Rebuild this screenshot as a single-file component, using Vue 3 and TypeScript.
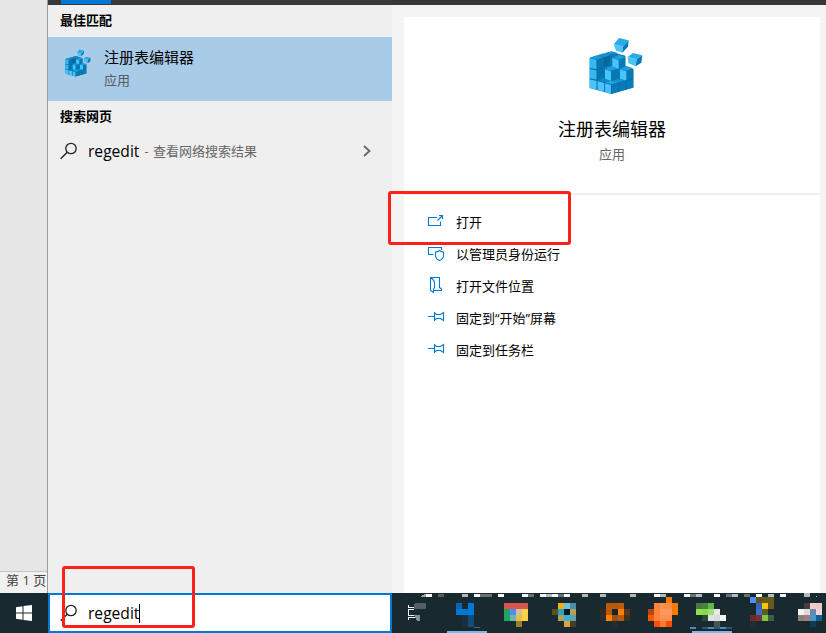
<script setup lang="ts">
import { h, type FunctionalComponent } from 'vue'

interface Action { icon: string; label: string }
type Cell = [x: number, y: number, color: string]

const actions: Action[] = [
  { icon: 'open', label: '打开' },
  { icon: 'admin', label: '以管理员身份运行' },
  { icon: 'folder', label: '打开文件位置' },
  { icon: 'pin', label: '固定到“开始”屏幕' },
  { icon: 'pin', label: '固定到任务栏' },
]

const cubeFaces: [string, string][] = [
  ['150,112 215,94 257,106 257,138 281,146 281,202 215,221 150,203', '#0879b5'],
  ['150,112 171,105 192,110 172,118', '#199bd8'],
  ['174,104 193,99 213,104 194,110', '#168fca'],
  ['196,98 215,93 235,98 215,103', '#168fca'],
  ['150,113 171,119 171,147 150,143', '#35b8f2'],
  ['173,119 190,113 190,141 173,147', '#0875ae'],
  ['192,112 211,106 211,134 192,140', '#08699f'],
  ['150,146 171,150 171,178 150,174', '#35b8f2'],
  ['173,150 194,146 194,180 173,178', '#0875ae'],
  ['150,177 171,181 171,208 150,203', '#48c4fa'],
  ['173,182 194,187 194,214 173,209', '#48c4fa'],
  ['196,188 214,193 214,220 196,215', '#48c4fa'],
  ['173,180 194,173 213,180 195,187', '#118bc8'],
  ['218,112 238,103 257,110 238,118', '#1ba0dd'],
  ['218,113 237,120 237,146 218,140', '#48c4fa'],
  ['239,120 257,112 257,137 239,145', '#0879b5'],
  ['196,145 215,137 234,144 215,151', '#1ba0dd'],
  ['196,147 214,153 214,181 196,175', '#48c4fa'],
  ['216,153 235,146 235,174 216,181', '#0879b5'],
  ['241,145 261,137 281,144 261,151', '#1ba0dd'],
  ['241,147 260,153 260,181 241,175', '#48c4fa'],
  ['262,153 281,146 281,173 262,180', '#0879b5'],
  ['216,183 239,175 259,182 236,188 216,192', '#1593cf'],
  ['196,186 215,181 235,187 215,193', '#20a5e0'],
  ['216,194 236,188 236,214 216,220', '#087bb9'],
  ['238,187 258,183 258,208 238,213', '#087bb9'],
  ['260,182 281,177 281,201 260,207', '#087bb9'],
  ['238,53 267,60 250,79 222,72', '#2bace6'],
  ['222,72 250,79 248,97 229,91', '#49c5fb'],
  ['267,60 265,79 248,97 250,79', '#0879b5'],
  ['280,98 308,105 291,117 264,110', '#2bace6'],
  ['264,110 291,117 288,138 266,129', '#49c5fb'],
  ['291,117 308,105 305,127 288,138', '#0879b5'],
]
const seams = 'M172 119V209M195 112V135M195 181V215M215 194V221M150 145L172 149M150 176L172 180L195 187L215 193L281 175M237 188V214M259 182V208M173 148L194 142'

const RegistryIcon: FunctionalComponent = () =>
  h('svg', { viewBox: '148 50 162 174' }, [
    ...cubeFaces.map(([points, fill]) => h('polygon', { points, fill })),
    h('path', { d: seams, fill: 'none', stroke: '#0a659a', 'stroke-width': 1.6 }),
  ])

const W = '#f6f6f6'
const L = '#b2babd'
const G = '#667276'

const topCells: Cell[] = [
  [426, 594, W], [438, 594, '#566063'], [462, 594, L], [474, 594, W], [480, 594, G], [486, 594, G],
  [498, 594, W], [522, 594, W], [528, 594, G], [540, 594, W], [546, 594, L], [552, 594, W],
  [558, 594, G], [564, 594, W], [582, 594, L], [600, 594, L], [630, 594, L], [654, 594, W],
  [660, 594, L], [684, 594, W], [690, 594, G], [696, 594, L], [714, 594, W], [726, 594, G],
  [732, 594, L], [744, 594, G], [756, 594, W], [768, 594, L], [780, 594, W],
]

const cells: Cell[] = [
  [468, 597, '#132d40'], [456, 603, '#0767b5'], [468, 603, '#0078d7'],
  [456, 609, '#0078d7'], [462, 609, '#0078d7'], [468, 609, '#0078d7'],
  [462, 615, '#15303f'], [468, 615, '#0d4c7d'], [462, 621, '#15303f'], [468, 621, '#104c78'],
  [504, 603, '#d9534f'], [510, 603, '#d9534f'], [516, 603, '#d9534f'], [522, 603, '#cf5b50'],
  [504, 609, '#1fa463'], [510, 609, '#4f8df5'], [516, 609, '#d4bf98'], [522, 609, '#ffd04a'],
  [504, 615, '#1fa463'], [510, 615, '#70b5a8'], [516, 615, '#dfbd5a'], [522, 615, '#ffcf46'], [516, 621, '#9f7d20'],
  [558, 603, '#eeb01e'], [564, 603, '#6fc2dc'], [570, 603, '#4a8fa5'],
  [552, 609, '#55521f'], [558, 609, '#2ba3c7'], [564, 609, '#0c1b20'], [570, 609, '#b0a05c'],
  [558, 615, '#b0a05c'], [564, 615, '#2fb4dc'], [570, 615, '#5ba2ab'], [564, 621, '#e2a23b'], [570, 621, '#4b3b1f'],
  [606, 603, '#b8590b'], [612, 603, '#b8590b'], [618, 603, '#bd5d0c'],
  [600, 609, '#33291f'], [606, 609, '#b8590b'], [612, 609, '#172327'], [618, 609, '#ff7f0a'], [624, 609, '#5a3519'],
  [600, 615, '#272d2c'], [606, 615, '#ff8008'], [612, 615, '#9a5014'], [618, 615, '#b8590b'], [624, 615, '#3b2d21'], [612, 621, '#252c2b'],
  [666, 597, '#ff7900'], [654, 603, '#ff813b'], [660, 603, '#ff8f4e'], [666, 603, '#ff8b47'], [672, 603, '#ff7900'],
  [648, 609, '#b14b15'], [654, 609, '#ff813b'], [660, 609, '#ff9860'], [666, 609, '#ff9860'], [672, 609, '#ff7900'],
  [648, 615, '#ff5900'], [654, 615, '#ff8541'], [660, 615, '#ff8f4e'], [666, 615, '#ff8f4e'],
  [654, 621, '#ff4c00'], [660, 621, '#ff7a30'], [666, 621, '#ff4c00'],
  [696, 603, '#4b7642'], [702, 603, '#4f803c'], [708, 603, '#61b844'],
  [696, 609, '#8be04e'], [702, 609, '#84dc4a'], [708, 609, '#a5de78'], [714, 609, '#e9e9e9'],
  [702, 615, '#2c4a30'], [708, 615, '#e0e2e3'], [714, 615, '#d9dcdd'], [720, 615, '#f3f3f3'], [714, 621, '#4a5559'],
  [750, 597, '#4d8ff9'], [756, 597, '#5e531a'], [762, 597, '#65591b'], [768, 597, '#65591b'],
  [756, 603, '#3467b5'], [762, 603, '#ffc400'], [768, 603, '#69591c'],
  [756, 609, '#3a70c4'], [762, 609, '#5b5c22'], [750, 615, '#6b2a2e'], [756, 615, '#793135'], [762, 615, '#80c843'], [768, 615, '#3c6039'], [750, 621, '#252b30'],
  [804, 603, '#493b3f'], [810, 603, '#f0cccd'], [816, 603, '#eac9ca'],
  [798, 609, '#f5f5f5'], [804, 609, '#dadcde'], [810, 609, '#6b87af'], [816, 609, '#eed5db'],
  [798, 615, '#8b7f7d'], [804, 615, '#a67c7e'], [810, 615, '#4696c7'], [816, 615, '#135f8b'], [810, 621, '#103c52'],
]

const badgeCells: Cell[] = [
  [690, 627, '#5089b2'], [702, 627, '#2e566c'], [708, 627, '#5089b2'],
  [714, 627, '#2e566c'], [720, 627, '#5089b2'], [726, 627, '#2e566c'],
]
</script>

<template>
  <div class="screen">
    <div class="upper">
      <aside class="document">
        <div class="page"></div>
        <div class="status">第 1 页</div>
      </aside>
      <main class="search">
        <div class="tabs"><span class="tab"></span></div>
        <div class="body">
          <section class="results">
            <h2>最佳匹配</h2>
            <div class="best">
              <RegistryIcon class="small-icon" />
              <div class="names">
                <div class="name">注册表编辑器</div>
                <div class="kind">应用</div>
              </div>
            </div>
            <h2>搜索网页</h2>
            <div class="web">
              <svg class="lens" viewBox="0 0 18 18"><circle cx="11" cy="6.5" r="5.2" /><path d="M7.2 10.2L.7 16.7" /></svg>
              <span class="query">regedit</span>
              <span class="hint">- 查看网络搜索结果</span>
              <svg class="chevron" viewBox="0 0 8 12"><path d="M1 1l5.5 5L1 11" /></svg>
            </div>
          </section>
          <section class="detail">
            <div class="hero">
              <RegistryIcon class="large-icon" />
              <div class="title">注册表编辑器</div>
              <div class="type">应用</div>
            </div>
            <ul class="actions">
              <li v-for="action in actions" :key="action.label">
                <svg viewBox="0 0 18 18">
                  <path v-if="action.icon === 'open'" d="M10 5.5H1.5V13.500H13.500V9.500M10.500 8.500L15.500 3.500M12 3.500H15.500V7" />
                  <template v-else-if="action.icon === 'admin'">
                    <path d="M6.500 10.500H1.500V3.500H14.500V6" />
                    <path d="M12.500 6.500C11 7.800 10 8 8.500 8V11.500C8.500 14 10 15.500 12.500 16.500C15 15.500 16.500 14 16.500 11.500V8C15 8 14 7.800 12.500 6.500Z" />
                  </template>
                  <path v-else-if="action.icon === 'folder'" d="M6.500 13V16.500L3.500 14.500V1.500L5.500 3Q7.500 5 7.500 7V11.500L6.500 13M3.500 1.500H12.500V11.500L14.500 13V14.500H6.500" />
                  <path v-else d="M1 8.500H7.500M7.500 4V13M7.500 5L9.500 6.500H13.500L16.500 4.500V12.500L13.500 10.500H9.500L7.500 12" />
                </svg>
                <span>{{ action.label }}</span>
              </li>
            </ul>
          </section>
        </div>
      </main>
    </div>
    <footer class="taskbar">
      <div class="start">
        <svg viewBox="0 0 16 16"><path d="M0 2.300L6.500 1.300V7.500H0ZM7.500 1.100L16 0V7.500H7.500ZM0 8.500H6.500V14.700L0 13.700ZM7.500 8.500H16V16L7.500 14.900Z" /></svg>
      </div>
      <div class="input">
        <svg class="lens" viewBox="0 0 18 18"><circle cx="11" cy="6.500" r="5.200" /><path d="M7.200 10.200L.7 16.700" /></svg>
        <span class="query">regedit</span><span class="caret"></span>
      </div>
      <svg class="apps" viewBox="392 593 434 40" shape-rendering="crispEdges">
        <path d="M420 597L425 594H426V597Z" fill="#9da5a8" />
        <rect v-for="(c, i) in topCells" :key="'t' + i" :x="c[0]" :y="c[1]" width="6" height="3" :fill="c[2]" />
        <rect x="804" y="593" width="6" height="4" fill="#b2babd" />
        <rect x="816" y="596" width="1" height="1" fill="#b2babd" />
        <path d="M408.500 605V608M408 607.500H414M408.500 610V615M408 609.500H414M408 615.500H414M408.500 617V620M408 617.500H415" fill="none" stroke="#f2f2f2" />
        <path d="M415 603H426V609H414V606Z" fill="#535f62" />
        <path d="M414 615H420V621H417Z" fill="#899093" />
        <rect v-for="(c, i) in cells" :key="'c' + i" :x="c[0]" :y="c[1]" width="6" height="6" :fill="c[2]" />
        <rect v-for="(c, i) in badgeCells" :key="'b' + i" :x="c[0]" :y="c[1]" width="6" height="2" :fill="c[2]" />
        <rect x="474" y="627" width="6" height="1" fill="#4a6a7d" />
        <rect x="447" y="631" width="40" height="2" fill="#76b9ed" />
        <rect x="692" y="631" width="40" height="2" fill="#76b9ed" />
      </svg>
    </footer>
    <div class="mark mark-open"></div>
    <div class="mark mark-input"></div>
  </div>
</template>

<style>
body { margin: 0; overflow: hidden; }
</style>

<style scoped>
* { box-sizing: border-box; }
.screen { position: relative; display: flex; flex-direction: column; width: 826px; height: 633px; overflow: hidden; font-family: "Open Sans", "Noto Sans CJK SC", sans-serif; font-size: 13px; color: #000; }
.upper { display: flex; height: 593px; }
.document { display: flex; flex-direction: column; width: 48px; border-right: 1px solid #9d9d9d; background: #e6e6e6; }
.page { flex: 1; }
.status { height: 22px; padding-left: 6px; border-top: 1px solid #c6c6c6; background: #f1f1f1; color: #444; line-height: 16px; white-space: nowrap; overflow: hidden; }
.search { display: flex; flex-direction: column; flex: 1; }
.tabs { height: 5px; padding-left: 13px; background: #383838; }
.tab { display: block; width: 50px; height: 4px; background: #0078d7; }
.body { display: flex; flex: 1; background: #f4f4f4; }
.results { width: 344px; background: #efefef; }
h2 { height: 32px; margin: 0; padding-left: 12px; font-size: 13px; line-height: 30px; font-weight: 700; }
.best { display: flex; height: 64px; padding: 10px 0 0 17px; background: #a8cbe7; }
.small-icon { width: 26px; height: 28px; margin-top: 2px; }
.names { padding-left: 13px; }
.name { height: 20px; font-size: 15px; line-height: 20px; }
.kind { height: 24px; color: #555d64; line-height: 26px; }
.web { display: flex; align-items: center; height: 36px; padding: 0 21px 0 12px; }
.lens { flex: none; width: 18px; height: 18px; fill: none; stroke: #222; stroke-width: 1.3; }
.query { margin-left: 10px; font-size: 15.6px; line-height: 20px; }
.hint { margin: -2px 0 0 5px; color: #666; word-spacing: 1px; }
.chevron { width: 8px; height: 12px; margin-left: auto; fill: none; stroke: #666; stroke-width: 1.8; }
.detail { display: flex; flex-direction: column; width: 416px; margin: 12px 6px 0 12px; background: #fff; }
.hero { display: flex; flex-direction: column; align-items: center; height: 178px; padding-top: 20px; border-bottom: 2px solid #f0f0f0; }
.large-icon { width: 54px; height: 58px; margin-left: 8px; }
.title { height: 28px; margin-top: 20px; font-size: 18px; line-height: 28px; }
.type { height: 20px; margin-top: 1px; color: #666; line-height: 20px; }
.actions { margin: 0; padding: 11px 0 0 23px; list-style: none; }
.actions li { display: flex; align-items: center; height: 32px; gap: 11px; }
.actions span { margin-top: -2px; }
.actions svg { width: 18px; height: 18px; margin-top: -2px; fill: none; stroke: #0078d7; stroke-width: 1.1; }
.taskbar { display: flex; height: 40px; background: #182a2f; }
.start { display: flex; align-items: center; justify-content: center; width: 48px; }
.start svg { width: 16px; height: 16px; fill: #fff; }
.input { display: flex; align-items: center; width: 344px; padding-left: 10px; border: 2px solid #0078d7; background: #fff; }
.caret { width: 1px; height: 19px; background: #000; }
.apps { flex: none; width: 434px; height: 40px; }
.mark { position: absolute; border: 3px solid #ff2117; border-radius: 3px; }
.mark-open { left: 388px; top: 191px; width: 183px; height: 54px; }
.mark-input { left: 62px; top: 566px; width: 133px; height: 62px; }
</style>
